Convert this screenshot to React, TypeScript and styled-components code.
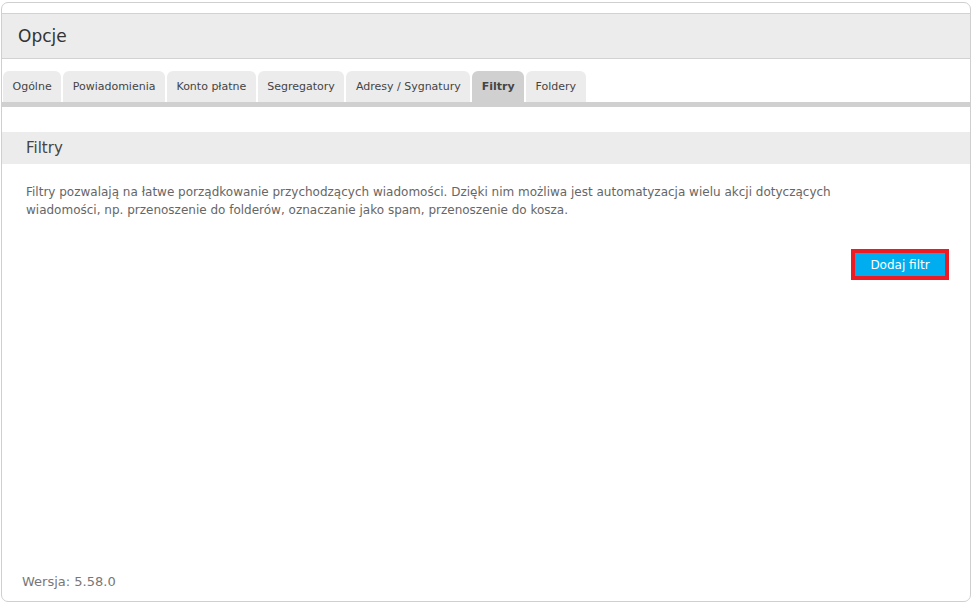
import { createGlobalStyle } from "styled-components";
import styled from "styled-components";

const tabs = ["Ogólne", "Powiadomienia", "Konto płatne", "Segregatory", "Adresy / Sygnatury", "Filtry", "Foldery"];

const GlobalStyle = createGlobalStyle`
  html, body {
    margin: 0;
    padding: 0;
    background: #fff;
  }
  body {
    font-family: "DejaVu Sans", Verdana, sans-serif;
  }
`;

export default function App() {
  return (
    <>
      <GlobalStyle />
      <Panel>
        <Header>Opcje</Header>
        <TabBar>
          {tabs.map((t) => (
            <Tab key={t} $active={t === "Filtry"}>{t}</Tab>
          ))}
        </TabBar>
        <SectionTitle>Filtry</SectionTitle>
        <Description>
          Filtry pozwalają na łatwe porządkowanie przychodzących wiadomości. Dzięki nim możliwa jest automatyzacja wielu akcji dotyczących
          wiadomości, np. przenoszenie do folderów, oznaczanie jako spam, przenoszenie do kosza.
        </Description>
        <Actions>
          <Highlight>
            <AddButton>Dodaj filtr</AddButton>
          </Highlight>
        </Actions>
        <Version>Wersja: 5.58.0</Version>
      </Panel>
    </>
  );
}

const Panel = styled.div`
  margin: 2px 0 0 1px;
  width: 968px;
  height: 598px;
  border: 1px solid #cfcfcf;
  border-radius: 7px;
  display: flex;
  flex-direction: column;
  box-sizing: content-box;
`;

const Header = styled.div`
  margin-top: 10px;
  height: 44px;
  border-top: 1px solid #d2d2d2;
  border-bottom: 1px solid #d2d2d2;
  background: #ececec;
  display: flex;
  align-items: center;
  padding-left: 16px;
  font-size: 17px;
  color: #333;
`;

const TabBar = styled.div`
  margin-top: 12px;
  display: flex;
  gap: 2px;
  padding-left: 1px;
  border-bottom: 5px solid #d0d0d0;
`;

const Tab = styled.div<{ $active?: boolean }>`
  height: 31px;
  padding: 0 9.5px;
  display: flex;
  align-items: center;
  border-radius: 6px 6px 0 0;
  font-size: 11px;
  color: #444;
  font-weight: ${(p) => (p.$active ? "bold" : "normal")};
  background: ${(p) => (p.$active ? "#d0d0d0" : "#ececec")};
`;

const SectionTitle = styled.div`
  margin-top: 25px;
  height: 32px;
  background: #ececec;
  display: flex;
  align-items: center;
  padding-left: 24px;
  font-size: 15px;
  color: #444;
`;

const Description = styled.p`
  margin: 19px 0 0 24px;
  max-width: 830px;
  font-size: 12px;
  line-height: 18px;
  color: #666;
`;

const Actions = styled.div`
  margin-top: 30px;
  display: flex;
  justify-content: flex-end;
  padding-right: 21px;
`;

const Highlight = styled.div`
  border: 4px solid #ed1c24;
  display: flex;
`;

const AddButton = styled.button`
  border: none;
  margin: 0;
  width: 90px;
  height: 23px;
  background: #00aeef;
  color: #fff;
  font-family: "DejaVu Sans", Verdana, sans-serif;
  font-size: 12px;
  font-weight: normal;
  padding: 0;
`;

const Version = styled.div`
  margin-top: auto;
  padding: 0 0 12px 20px;
  font-size: 13px;
  color: #777;
`;
